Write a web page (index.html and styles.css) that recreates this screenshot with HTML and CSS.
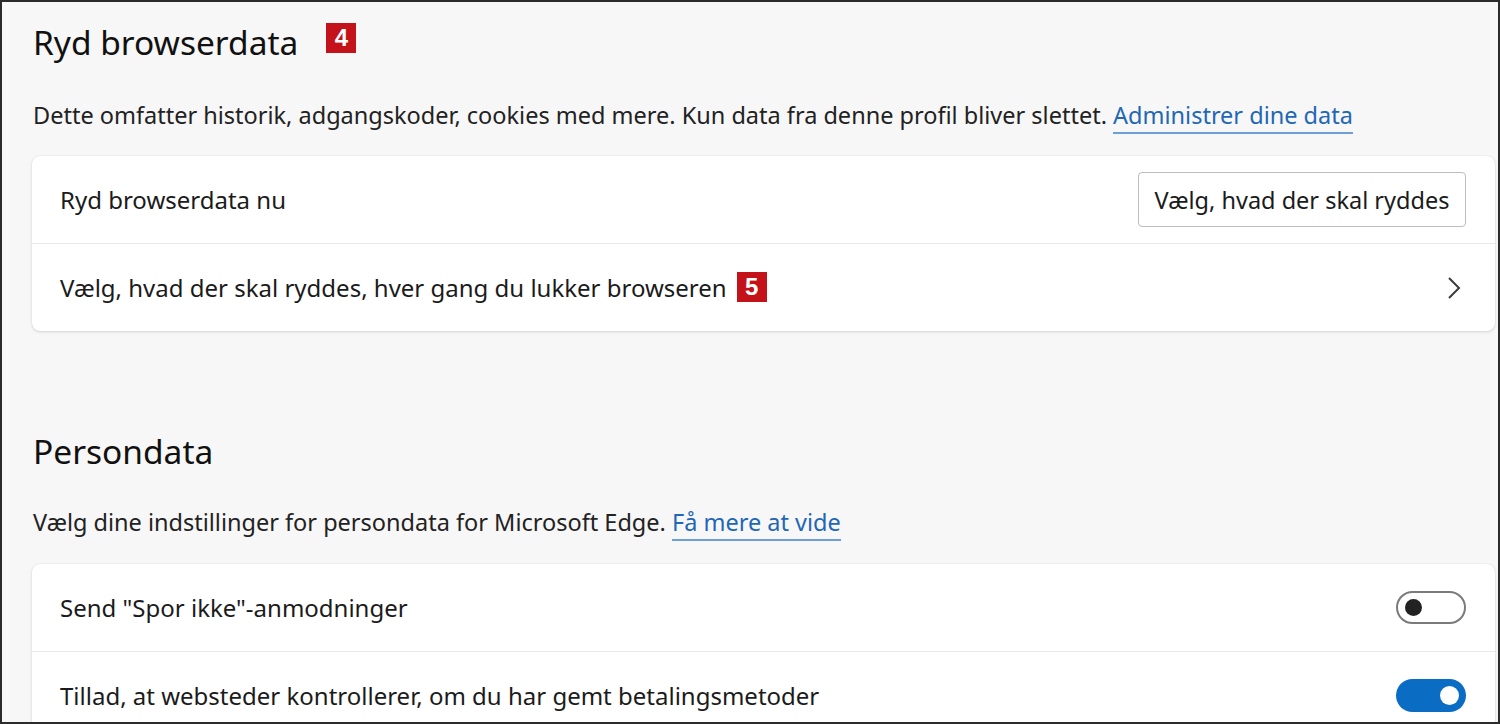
FILE: index.html
```html
<!DOCTYPE html>
<html lang="da">
<head>
<meta charset="utf-8">
<title>Ryd browserdata</title>
<link rel="stylesheet" href="styles.css">
</head>
<body>
<div class="frame">
  <section class="section first">
    <div class="title-row">
      <h2 class="title">Ryd browserdata</h2>
      <span class="badge badge-4">4</span>
    </div>
    <p class="desc">Dette omfatter historik, adgangskoder, cookies med mere. Kun data fra denne profil bliver slettet. <a class="link" href="#">Administrer dine data</a></p>
    <div class="card">
      <div class="row">
        <span class="row-label">Ryd browserdata nu</span>
        <button class="btn">Vælg, hvad der skal ryddes</button>
      </div>
      <div class="row">
        <span class="row-label">Vælg, hvad der skal ryddes, hver gang du lukker browseren <span class="badge badge-5">5</span></span>
        <svg class="chevron" width="16" height="24" viewBox="0 0 16 24"><path d="M3 2 L13 12 L3 22" fill="none" stroke="#3b3b3b" stroke-width="2"/></svg>
      </div>
    </div>
  </section>
  <section class="section second">
    <div class="title-row">
      <h2 class="title">Persondata</h2>
    </div>
    <p class="desc">Vælg dine indstillinger for persondata for Microsoft Edge. <a class="link" href="#">Få mere at vide</a></p>
    <div class="card">
      <div class="row">
        <span class="row-label">Send "Spor ikke"-anmodninger</span>
        <span class="toggle off"><span class="knob"></span></span>
      </div>
      <div class="row">
        <span class="row-label">Tillad, at websteder kontrollerer, om du har gemt betalingsmetoder</span>
        <span class="toggle on"><span class="knob"></span></span>
      </div>
    </div>
  </section>
</div>
</body>
</html>
```

FILE: styles.css
```css
html, body {
  margin: 0;
  padding: 0;
}
body {
  font-family: "Noto Sans", "Open Sans", sans-serif;
  color: #1b1b1b;
  background: #f7f7f7;
}
.frame {
  width: 1500px;
  height: 724px;
  box-sizing: border-box;
  border: 2px solid #2b2b2b;
  background: #f7f7f7;
  overflow: hidden;
  padding: 20px 3px 0 30px;
}
.title-row {
  display: flex;
  align-items: center;
  height: 40px;
  padding-left: 1px;
}
.title {
  margin: 0;
  font-size: 33.5px;
  font-weight: 400;
  line-height: 40px;
  color: #111;
}
.badge {
  display: inline-flex;
  align-items: center;
  justify-content: center;
  width: 30px;
  height: 30px;
  background: #c4121a;
  color: #fff;
  font-family: "Liberation Sans", Arial, sans-serif;
  font-weight: 700;
  font-size: 24px;
  line-height: 1;
}
.badge-4 {
  margin-left: 28px;
  margin-top: -8px;
}
.badge-5 {
  margin-left: 10px;
  vertical-align: middle;
  position: relative;
  top: -1px;
}
.desc {
  margin: 38px 0 0 1px;
  font-size: 23.5px;
  line-height: 30px;
  height: 30px;
  color: #222;
  white-space: nowrap;
}
.link {
  color: #2267b5;
  text-decoration: none;
  border-bottom: 2px solid #6f9fd6;
  padding-bottom: 1px;
}
.card {
  margin-top: 26px;
  background: #fff;
  border-radius: 8px;
  box-shadow: 0 1px 3px rgba(0,0,0,0.14), 0 0 1px rgba(0,0,0,0.12);
}
.row {
  display: flex;
  align-items: center;
  justify-content: space-between;
  height: 87px;
  box-sizing: border-box;
  padding: 0 29px 0 28px;
  font-size: 24px;
  white-space: nowrap;
}
.row + .row {
  border-top: 1px solid #e8e8e8;
  height: 88px;
}
.row-label {
  display: inline-flex;
  align-items: center;
  color: #1b1b1b;
}
.btn {
  font-family: inherit;
  font-size: 23.5px;
  color: #1b1b1b;
  background: #fff;
  border: 1px solid #bdbdbd;
  border-radius: 4px;
  height: 55px;
  width: 328px;
  padding: 0;
}
.chevron {
  margin-right: 4px;
}
.second {
  margin-top: 100px;
}
.second .desc {
  margin-top: 36px;
}
.second .card {
  margin-top: 27px;
}
.toggle {
  display: flex;
  align-items: center;
  box-sizing: border-box;
  width: 70px;
  height: 33px;
  border-radius: 17px;
}
.toggle.off {
  border: 2px solid #7a7a7a;
  background: #fff;
  padding-left: 7px;
}
.toggle.off .knob {
  width: 17px;
  height: 17px;
  border-radius: 50%;
  background: #222;
}
.toggle.on {
  background: #0a6cc2;
  justify-content: flex-end;
  padding-right: 7px;
}
.toggle.on .knob {
  width: 19px;
  height: 19px;
  border-radius: 50%;
  background: #fff;
}
```
